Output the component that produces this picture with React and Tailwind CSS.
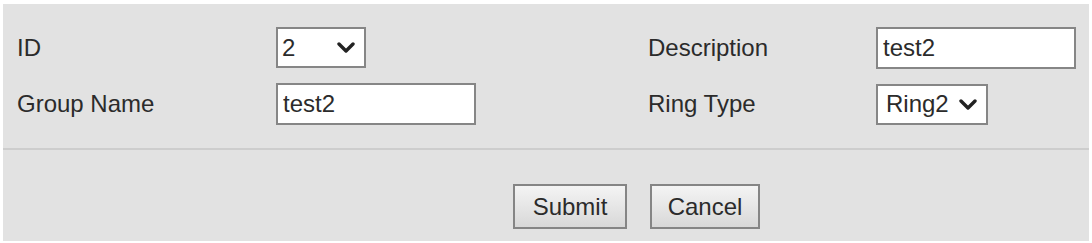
import React, { useState } from 'react';

// 下向きの太いシェブロン（セレクトボックス用）
const Chevron = () => (
  <svg width="18" height="11" viewBox="0 0 18 11" className="shrink-0">
    <path d="M2 2 L9 9 L16 2" fill="none" stroke="#222" strokeWidth="3.4" strokeLinecap="round" strokeLinejoin="round" />
  </svg>
);

const SelectBox = ({ value, className }) => (
  <div className={`h-[41px] bg-white border-2 border-[#868686] flex items-center justify-between pl-[4px] pr-[9px] ${className}`}>
    <span>{value}</span>
    <Chevron />
  </div>
);

const TextBox = ({ value, onChange }) => (
  <input
    type="text"
    value={value}
    onChange={(e) => onChange(e.target.value)}
    className="w-[200px] h-[42px] bg-white border-2 border-[#868686] pl-[5px] outline-none text-[#2b2b2b] font-['Liberation_Sans',Arial,sans-serif] text-[24px]"
  />
);

const Btn = ({ children, className }) => (
  <button
    type="button"
    className={`h-[45px] border-2 border-[#858585] bg-gradient-to-b from-[#f4f4f4] to-[#d8d8d8] text-[#2b2b2b] text-[24px] ${className}`}
  >
    {children}
  </button>
);

const App = () => {
  const [groupName, setGroupName] = useState('test2');
  const [desc, setDesc] = useState('test2');

  return (
    <div className="w-[1092px] h-[243px] bg-white pt-[4px] pl-[3px] pr-[3px] pb-[2px] font-['Liberation_Sans',Arial,sans-serif] text-[24px] text-[#2b2b2b]">
      <div className="h-full bg-[#e2e2e2] flex flex-col">
        {/* 入力フォーム */}
        <div className="pt-[23px] pl-[14px] h-[146px] border-b-2 border-[#cdcdcd]">
          <div className="grid grid-cols-[259px_372px_228px_1fr] grid-rows-[41px_42px] gap-y-[15px] items-center">
            <span>ID</span>
            <SelectBox value="2" className="w-[90px]" />
            <span>Description</span>
            <TextBox value={desc} onChange={setDesc} />

            <span>Group Name</span>
            <TextBox value={groupName} onChange={setGroupName} />
            <span>Ring Type</span>
            <SelectBox value="Ring2" className="w-[112px] pl-[8px]" />
          </div>
        </div>

        {/* ボタン */}
        <div className="flex-1 flex items-start pt-[34px] pl-[510px] gap-[23px]">
          <Btn className="w-[114px]">Submit</Btn>
          <Btn className="w-[110px]">Cancel</Btn>
        </div>
      </div>
    </div>
  );
};

export default App;
